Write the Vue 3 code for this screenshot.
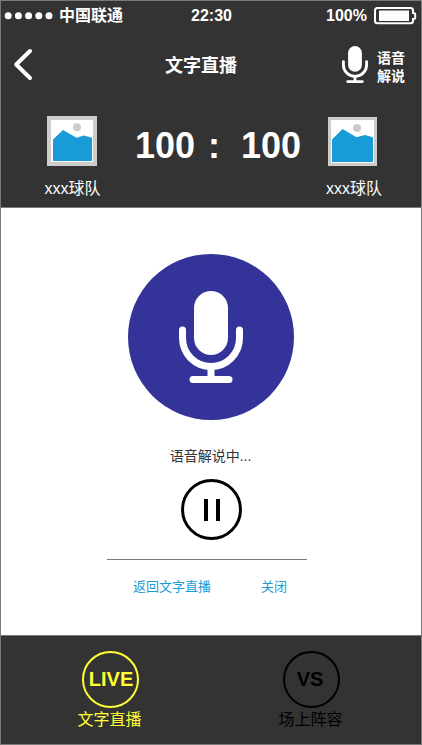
<script setup>
const teams = [
  { side: 'home', name: 'xxx球队', score: 100 },
  { side: 'away', name: 'xxx球队', score: 100 },
]
const tabs = [
  { mark: 'LIVE', label: '文字直播', active: true },
  { mark: 'VS', label: '场上阵容', active: false },
]
</script>

<template>
  <div class="phone">
    <header class="top">
      <div class="status">
        <svg class="signal" width="54" height="10" viewBox="0 0 54 10">
          <circle v-for="n in 5" :key="n" :cx="4.200 + (n - 1) * 10.200" cy="4.700" r="3.500" />
        </svg>
        <span class="carrier">中国联通</span>
        <span class="time">22:30</span>
        <span class="percent">100%</span>
        <svg class="battery" width="43" height="18" viewBox="0 0 43 18">
          <path d="M3.500 1H36.500Q39 1 39 3.500V6H40Q41.200 6 41.200 8V10.500Q41.200 12 40 12H39V14Q39 16.200 36.500 16.200H3.500Q1 16.200 1 14V3.500Q1 1 3.500 1Z" fill="none" stroke="#fff" stroke-width="2" />
          <rect x="5" y="3.500" width="30" height="10.500" fill="#fff" />
        </svg>
      </div>

      <nav class="titlebar">
        <svg class="back" width="20" height="34" viewBox="0 0 20 34">
          <path d="M17 3L3.200 16.500L17 30" />
        </svg>
        <h1>文字直播</h1>
        <div class="voice">
          <svg width="26" height="37" viewBox="0 0 64 92" preserveAspectRatio="none">
            <rect x="15" y="0" width="34" height="64" rx="17" fill="#fff" />
            <path d="M3.500 39V47A28.500 28.500 0 0 0 60.500 47V39M32 76V88M14 88.500H50" />
          </svg>
          <span>语音<br />解说</span>
        </div>
      </nav>

      <div class="match">
        <div v-for="team in teams" :key="team.side" class="team" :class="team.side">
          <svg v-if="team.side === 'home'" width="50" height="50" viewBox="0 0 50 50">
            <rect width="50" height="50" fill="#ccc" />
            <rect x="4" y="4" width="42" height="42" fill="#fff" />
            <circle cx="30" cy="11.300" r="4" fill="#ccc" />
            <path d="M6 23.500L16 14L29.500 21.700L37 19.500L45 21.800V45H6Z" fill="#199bd7" />
          </svg>
          <svg v-else width="49" height="49" viewBox="0 0 49 49">
            <rect width="49" height="49" fill="#ccc" />
            <rect x="3" y="3" width="43" height="43" fill="#fff" />
            <circle cx="29" cy="11" r="4" fill="#ccc" />
            <path d="M4 22.500L14.500 12L28.500 20.200L37 18L45 20.200V45H4Z" fill="#199bd7" />
          </svg>
          <span>{{ team.name }}</span>
        </div>
        <div class="score">
          <span>{{ teams[0].score }}</span>
          <span class="colon">:</span>
          <span>{{ teams[1].score }}</span>
        </div>
      </div>
    </header>

    <main class="player">
      <div class="disc">
        <svg width="64" height="92" viewBox="0 0 64 92">
          <rect x="15" y="0" width="34" height="64" rx="17" fill="#fff" />
          <path d="M3.500 39V47A28.500 28.500 0 0 0 60.500 47V39M32 76V88M14 88.500H50" />
        </svg>
      </div>
      <p>语音解说中...</p>
      <button class="pause" type="button" aria-label="暂停"><i></i><i></i></button>
      <div class="links">
        <a>返回文字直播</a>
        <a>关闭</a>
      </div>
    </main>

    <footer class="tabs">
      <div v-for="tab in tabs" :key="tab.mark" class="tab" :class="{ active: tab.active }">
        <b>{{ tab.mark }}</b>
        <span>{{ tab.label }}</span>
      </div>
    </footer>
  </div>
</template>

<style>
body {
  margin: 0;
  background: #fff;
}
</style>

<style scoped>
.phone {
  box-sizing: border-box;
  width: 422px;
  height: 745px;
  border: 1px solid #797979;
  display: flex;
  flex-direction: column;
  overflow: hidden;
  font-family: "Liberation Sans", "Noto Sans CJK SC", sans-serif;
}
svg {
  display: block;
  flex: none;
}
.top {
  box-sizing: border-box;
  height: 207px;
  flex: none;
  background: #333;
  border-bottom: 1px solid #797979;
  color: #fff;
}
.status {
  display: flex;
  align-items: center;
  height: 29px;
  padding-left: 3px;
  font-size: 16px;
  line-height: 20px;
  font-weight: bold;
  white-space: nowrap;
}
.signal {
  fill: #fff;
}
.carrier {
  box-sizing: border-box;
  width: 133px;
  padding-left: 1px;
}
.time {
  width: 135px;
}
.percent {
  width: 48px;
}
.titlebar {
  display: grid;
  grid-template-columns: 120px 160px 1fr;
  align-items: center;
  height: 70px;
}
.back {
  margin-left: 12px;
}
.back path {
  fill: none;
  stroke: #fff;
  stroke-width: 4;
  stroke-linecap: round;
  stroke-linejoin: round;
}
h1 {
  margin: 2px 0 0;
  font-size: 18px;
  line-height: 24px;
  text-align: center;
}
.voice {
  display: flex;
  align-items: center;
  padding-left: 61px;
  padding-bottom: 2px;
  gap: 9px;
  font-size: 14px;
  line-height: 18px;
  font-weight: bold;
}
.voice span {
  padding-top: 5px;
}
.voice path,
.disc path {
  fill: none;
  stroke: #fff;
  stroke-width: 7;
  stroke-linecap: round;
}
.match {
  display: grid;
  grid-template-columns: 114px 206px 100px;
  grid-template-areas: "home score away";
  padding-top: 16px;
}
.team {
  display: flex;
  flex-direction: column;
  align-items: center;
  justify-content: flex-end;
  height: 85px;
  font-size: 16px;
}
.team span {
  margin-top: 11px;
  line-height: 24px;
}
.home {
  grid-area: home;
  padding-left: 28px;
}
.home span {
  padding-left: 1px;
}
.away {
  grid-area: away;
  padding-right: 37px;
}
.away span {
  padding-left: 3px;
}
.score {
  grid-area: score;
  display: grid;
  grid-template-columns: 60px 46px 60px;
  padding: 9px 0 0 20px;
  font-size: 36px;
  line-height: 41px;
  font-weight: bold;
}
.colon {
  padding-left: 13px;
}
.player {
  flex: 1;
  display: flex;
  flex-direction: column;
  align-items: center;
}
.disc {
  width: 166px;
  height: 166px;
  margin-top: 46px;
  border-radius: 50%;
  background: #339;
  display: flex;
  align-items: center;
  justify-content: center;
}
p {
  margin: 26px 1px 0 0;
  font-size: 14px;
  line-height: 20px;
  color: #333;
}
.pause {
  box-sizing: border-box;
  width: 61px;
  height: 61px;
  margin: 13px 0 0 1px;
  padding: 0;
  border: 3px solid #000;
  border-radius: 50%;
  background: none;
  display: flex;
  align-items: center;
  justify-content: center;
  gap: 8px;
}
.pause i {
  width: 4px;
  height: 22px;
  background: #000;
}
.links {
  box-sizing: border-box;
  width: 200px;
  margin: 19px 8px 0 0;
  padding: 17px 0 0 26px;
  border-top: 1px solid #797979;
  display: flex;
  gap: 50px;
  font-size: 13px;
  line-height: 20px;
  color: #199bd7;
}
.tabs {
  box-sizing: border-box;
  height: 109px;
  flex: none;
  display: flex;
  justify-content: center;
  gap: 137px;
  padding-top: 15px;
  border-top: 1px solid #797979;
  background: #333;
  color: #000;
}
.tab {
  width: 64px;
  display: flex;
  flex-direction: column;
  align-items: center;
  font-size: 16px;
  line-height: 24px;
  white-space: nowrap;
}
.tab b {
  box-sizing: border-box;
  flex: none;
  width: 57px;
  height: 57px;
  padding: 0 3px 2px 0;
  border: 2px solid currentColor;
  border-radius: 50%;
  display: flex;
  align-items: center;
  justify-content: center;
  font-size: 20px;
}
.tab.active b {
  padding: 0 0 2px 1px;
}
.tab span {
  margin-right: 2px;
}
.active {
  color: #ff3;
}
</style>
